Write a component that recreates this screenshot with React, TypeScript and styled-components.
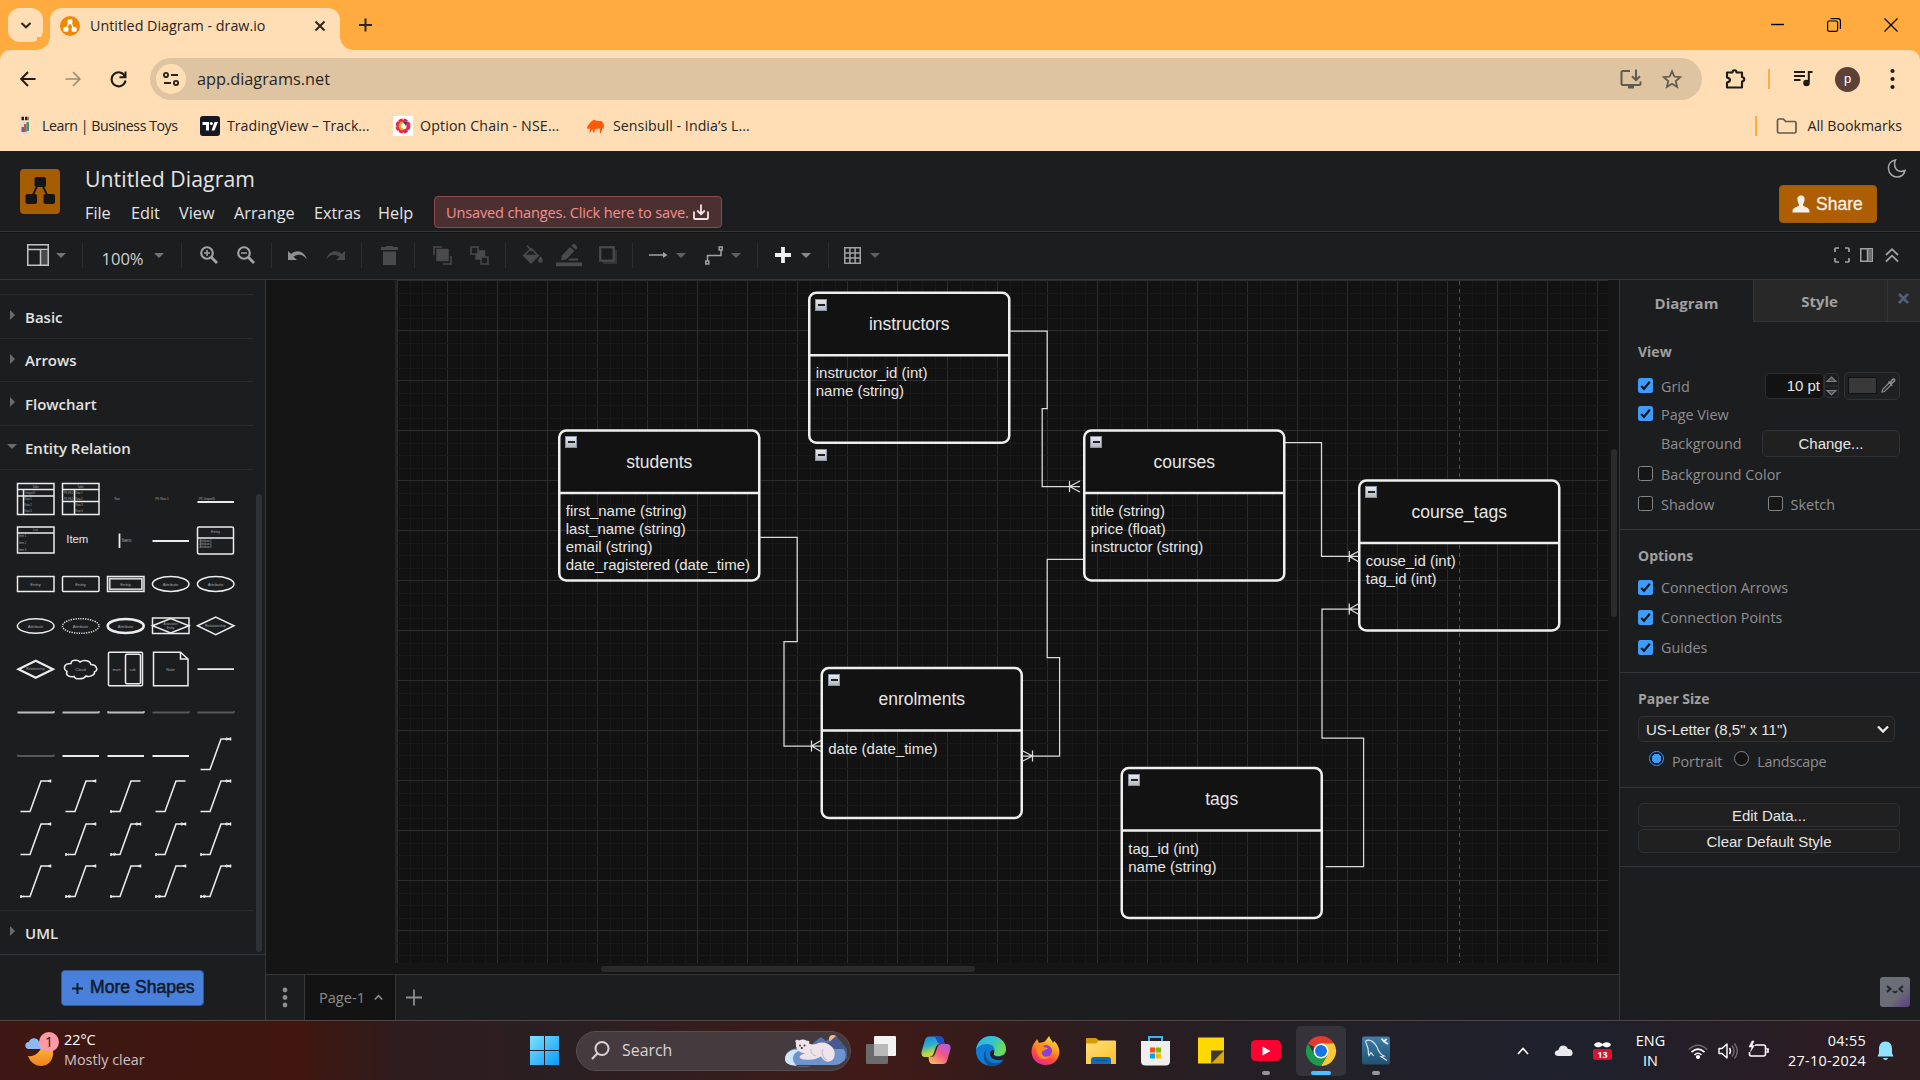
import React from "react";
import styled, { createGlobalStyle } from "styled-components";

const UI = `"Open Sans", "Noto Sans", sans-serif`;
const SANS = `"Liberation Sans", Arial, sans-serif`;

const Global = createGlobalStyle`
  * { box-sizing: border-box; }
  html, body { margin: 0; padding: 0; background: #1c1d1f; overflow: hidden; }
  svg { display: block; flex: none; overflow: visible; }
`;

const Screen = styled.div`
  width: 1920px;
  height: 1080px;
  display: flex;
  flex-direction: column;
  font-family: ${UI};
  overflow: hidden;
`;

const Label = styled.span<{ $size: number; $color?: string; $ls?: number; $weight?: number; $font?: string; $ml?: number; $mt?: number }>`
  font-family: ${(p) => p.$font || UI};
  font-size: ${(p) => p.$size}px;
  font-weight: ${(p) => p.$weight || 400};
  color: ${(p) => p.$color || "inherit"};
  letter-spacing: ${(p) => p.$ls || 0}px;
  margin-left: ${(p) => p.$ml || 0}px;
  margin-top: ${(p) => p.$mt || 0}px;
  line-height: 1.2;
  white-space: nowrap;
`;
const Grow = styled.div`
  flex: 1;
`;
const Gap = styled.div<{ $w: number }>`
  width: ${(p) => p.$w}px;
  flex: none;
`;

/* ---------- Browser chrome ---------- */

const TabStrip = styled.div`
  height: 50px;
  background: #ffab40;
  display: flex;
  align-items: flex-end;
  padding: 0 1px 0 8px;
  flex: none;
`;
const TabSearch = styled.div`
  width: 35px;
  height: 34px;
  border-radius: 12px;
  background: #ffdeb5;
  display: flex;
  align-items: center;
  justify-content: center;
  margin: 0 7px 8px 0;
`;
const Tab = styled.div`
  position: relative;
  width: 290px;
  height: 42px;
  background: #ffdeb5;
  border-radius: 12px 12px 0 0;
  display: flex;
  align-items: center;
  padding: 0 14px 7px 10px;
  color: #28241f;
  &::before, &::after {
    content: "";
    position: absolute;
    bottom: 0;
    width: 13px;
    height: 13px;
  }
  &::before { left: -13px; background: radial-gradient(circle at 0 0, #ffab40 12.5px, #ffdeb5 13px); }
  &::after { right: -13px; background: radial-gradient(circle at 100% 0, #ffab40 12.5px, #ffdeb5 13px); }
`;
const NewTab = styled.div`
  width: 50px;
  height: 50px;
  display: flex;
  align-items: center;
  justify-content: center;
`;
const WindowButton = styled.div<{ $w: number }>`
  width: ${(p) => p.$w}px;
  height: 49px;
  margin-bottom: 1px;
  display: flex;
  align-items: center;
  justify-content: center;
`;

const ChromeBars = styled.div`
  background: #ffab40;
  height: 101px;
  flex: none;
`;
const ChromeSurface = styled.div`
  background: #ffdeb5;
  border-radius: 10px 10px 0 0;
  height: 101px;
  padding-top: 8px;
`;
const AddressRow = styled.div`
  height: 42px;
  display: flex;
  align-items: center;
`;
const NavButton = styled.div<{ $w: number; $pl?: number }>`
  width: ${(p) => p.$w}px;
  height: 42px;
  flex: none;
  display: flex;
  align-items: center;
  justify-content: center;
  padding-left: ${(p) => p.$pl || 0}px;
`;
const Omnibox = styled.div`
  width: 1552px;
  height: 42px;
  flex: none;
  margin-left: 3px;
  border-radius: 21px;
  background: #dec4a1;
  display: flex;
  align-items: center;
  padding: 0 19px 0 6px;
  color: #28241f;
`;
const SiteInfo = styled.div`
  width: 30px;
  height: 30px;
  border-radius: 50%;
  background: #ffdeb5;
  display: flex;
  align-items: center;
  justify-content: center;
  margin-right: 11px;
`;
const Avatar = styled.div`
  width: 25px;
  height: 25px;
  border-radius: 50%;
  background: #5d4037;
  color: #fff;
  font: 13px/23px ${SANS};
  text-align: center;
  flex: none;
`;
const VBar = styled.div`
  width: 2px;
  height: 20px;
  background: #ffab40;
`;
const BookmarkRow = styled.div`
  height: 51px;
  display: flex;
  align-items: center;
  padding: 0 18px 0 15px;
  color: #28241f;
`;
const Bookmark = styled.div<{ $w: number; $gap: number }>`
  width: ${(p) => p.$w}px;
  display: flex;
  align-items: center;
  gap: ${(p) => p.$gap}px;
`;

/* ---------- App header ---------- */

const Header = styled.header`
  height: 80px;
  background: #1c1d1f;
  display: flex;
  padding-left: 20px;
  flex: none;
  color: #e4e4e4;
`;
const Logo = styled.div`
  width: 40px;
  height: 45px;
  margin: 18px 25px 0 0;
  border-radius: 4px;
  background: #a65c00;
`;
const HeaderMain = styled.div`
  display: flex;
  flex-direction: column;
  padding-top: 15px;
`;
const MenuRow = styled.div`
  display: flex;
  align-items: center;
  height: 32px;
  margin-top: 5px;
`;
const MenuItem = styled.div<{ $w: number }>`
  width: ${(p) => p.$w}px;
  font-size: 16.3px;
  line-height: 24px;
  white-space: nowrap;
  padding-top: 1px;
`;
const SaveNotice = styled.div`
  width: 288px;
  height: 32px;
  border: 1px solid #8b4a50;
  border-radius: 4px;
  background: #4b3032;
  color: #f68f8f;
  display: flex;
  align-items: center;
  justify-content: space-between;
  padding: 0 12px 0 11px;
`;
const HeaderRight = styled.div`
  display: flex;
  flex-direction: column;
  align-items: flex-end;
  padding: 7px 13px 0 0;
`;
const ShareButton = styled.div`
  width: 98px;
  height: 38px;
  margin: 6px 30px 0 0;
  border-radius: 4px;
  background: #ae5e02;
  border: 1px solid #a35a06;
  color: #f4efe9;
  display: flex;
  align-items: center;
  padding-left: 12px;
  gap: 6px;
  -webkit-text-stroke: 0.3px #f4efe9;
`;

const Toolbar = styled.div`
  height: 49px;
  flex: none;
  background: #1c1d1f;
  border-top: 1px solid #36373a;
  border-bottom: 1px solid #36373a;
  box-shadow: inset 0 1px 0 #111;
  display: flex;
  align-items: center;
  padding: 0 16px 1px 20px;
  color: #a3a3a3;
`;
const Tool = styled.div<{ $w: number; $ml?: number; $off?: boolean }>`
  width: ${(p) => p.$w}px;
  margin-left: ${(p) => p.$ml || 0}px;
  color: ${(p) => (p.$off ? "#4a4a4a" : "inherit")};
  display: flex;
  align-items: center;
  justify-content: center;
`;
const Rule = styled.div`
  width: 1px;
  height: 25px;
  background: #2c2d2f;
`;
const Caret = styled.div<{ $c?: string }>`
  border: 5.5px solid transparent;
  border-top-color: ${(p) => p.$c || "#737373"};
  border-bottom: 0;
`;

/* ---------- Workspace ---------- */

const Workspace = styled.div`
  height: 740px;
  flex: none;
  display: flex;
`;
const Sidebar = styled.aside`
  width: 266px;
  background: #1c1d1f;
  border-right: 1px solid #36373a;
  display: flex;
  flex-direction: column;
`;
const SideScroll = styled.div`
  height: 675px;
  display: flex;
  border-bottom: 1px solid #333437;
`;
const SideList = styled.div`
  width: 253px;
  padding-top: 14px;
`;
const SideTrack = styled.div`
  width: 12px;
  display: flex;
  padding: 214px 3px 0 3px;
`;
const Thumb = styled.div<{ $w: number; $h: number }>`
  width: ${(p) => p.$w}px;
  height: ${(p) => p.$h}px;
  border-radius: 4px;
  background: #303134;
`;
const Section = styled.div<{ $h: number }>`
  height: ${(p) => p.$h}px;
  border-top: 1px solid #2a2b2d;
  display: flex;
  align-items: center;
  color: #e2e2e2;
`;
const Twist = styled.div<{ $open?: boolean }>`
  width: 25px;
  padding-left: ${(p) => (p.$open ? 7 : 10)}px;
  padding-bottom: 3px;
`;
const TwistRight = styled.div`
  width: 0;
  border: 5px solid transparent;
  border-left-color: #6a6a6a;
  border-right: 0;
`;
const TwistDown = styled.div`
  width: 0;
  border: 5px solid transparent;
  border-top-color: #6a6a6a;
  border-bottom: 0;
`;
const Palette = styled.div`
  height: 441px;
  border-top: 1px solid #2a2b2d;
  padding: 8px 0 0 13px;
  display: grid;
  grid-template-columns: repeat(5, 45px);
  grid-auto-rows: 42.45px;
`;
const MoreWrap = styled.div`
  flex: 1;
  padding: 15px 0 0 61px;
`;
const MoreButton = styled.div`
  width: 143px;
  height: 36px;
  border-radius: 4px;
  background: #4980dc;
  border: 1px solid #35568f;
  color: #121c2c;
  display: flex;
  align-items: center;
  padding-left: 10px;
  gap: 7px;
  -webkit-text-stroke: 0.55px #121c2c;
`;

const CanvasColumn = styled.div`
  width: 1353px;
  display: flex;
  flex-direction: column;
`;
const CanvasArea = styled.div`
  position: relative;
  height: 694px;
  background: #151515;
  overflow: hidden;
`;
const Sheet = styled.svg`
  position: absolute;
  left: 0;
  top: 0;
`;
const EntityBox = styled.div`
  position: absolute;
  width: 200px;
  height: 150px;
  color: #e6e6e6;
  font-family: ${SANS};
`;
const EntityHead = styled.div`
  height: 62.5px;
  border-radius: 8px 8px 0 0;
  background: #121212;
  display: flex;
  align-items: center;
  justify-content: center;
  font-size: 17.5px;
  padding-top: 1px;
`;
const EntityBody = styled.div`
  padding: 9px 0 0 6.5px;
  font-size: 15px;
  line-height: 18px;
  white-space: nowrap;
`;
const Fold = styled.div`
  position: absolute;
  width: 12px;
  height: 12px;
  border: 1px solid #8a93a8;
  background: linear-gradient(#e9e9ee, #b6b8c0);
  display: flex;
  align-items: center;
  justify-content: center;
  &::after { content: ""; width: 7px; height: 1.5px; background: #222; }
`;
const ScrollThumb = styled.div<{ $x: number; $y: number; $w: number; $h: number }>`
  position: absolute;
  left: ${(p) => p.$x}px;
  top: ${(p) => p.$y}px;
  width: ${(p) => p.$w}px;
  height: ${(p) => p.$h}px;
  border-radius: 3px;
  background: #2b2b2b;
`;
const Footer = styled.div`
  height: 46px;
  background: #1c1d1f;
  border-top: 1px solid #36373a;
  display: flex;
  color: #8d8d8d;
`;
const FooterCell = styled.div<{ $w: number; $active?: boolean; $line?: boolean }>`
  width: ${(p) => p.$w}px;
  background: ${(p) => (p.$active ? "#131313" : "transparent")};
  border-right: ${(p) => (p.$line ? "1px solid #36373a" : "0")};
  display: flex;
  align-items: center;
  justify-content: center;
  gap: 9px;
  padding-top: 1px;
`;

/* ---------- Format panel ---------- */

const Panel = styled.aside`
  width: 301px;
  background: #1c1d1f;
  border-left: 1px solid #36373a;
  display: flex;
  flex-direction: column;
  color: #8f8f8f;
`;
const PanelTabs = styled.div`
  height: 42px;
  display: flex;
  flex: none;
`;
const PanelTab = styled.div<{ $w: number; $off?: boolean }>`
  width: ${(p) => p.$w}px;
  background: ${(p) => (p.$off ? "#282828" : "transparent")};
  border-left: ${(p) => (p.$off ? "1px solid #333437" : "0")};
  border-bottom: ${(p) => (p.$off ? "1px solid #333437" : "0")};
  display: flex;
  align-items: center;
  justify-content: center;
  padding: ${(p) => (p.$off ? "0 2px 0 0" : "4px 0 0 0")};
`;
const Group = styled.div<{ $h: number; $pt: number }>`
  height: ${(p) => p.$h}px;
  padding: ${(p) => p.$pt}px 20px 0 18px;
  border-bottom: 1px solid #333437;
`;
const Row = styled.div<{ $h: number; $pl?: number }>`
  height: ${(p) => p.$h}px;
  padding-left: ${(p) => p.$pl || 0}px;
  display: flex;
  align-items: center;
`;
const Check = styled.div<{ $on?: boolean }>`
  width: 15px;
  height: 15px;
  flex: none;
  border-radius: 2.5px;
  border: ${(p) => (p.$on ? "0" : "1px solid #858585")};
  background: ${(p) => (p.$on ? "#3f9cff" : "#161616")};
  display: flex;
  align-items: center;
  justify-content: center;
`;
const Field = styled.div`
  width: 59px;
  height: 26px;
  border: 1px solid #2c2d31;
  border-radius: 5px;
  background: #121212;
  color: #e6e6e6;
  font: 15px/24px ${SANS};
  text-align: right;
  padding-right: 3px;
  flex: none;
`;
const Spinner = styled.div`
  width: 15px;
  height: 25px;
  margin-right: 5px;
  border: 1px solid #303134;
  border-radius: 4px;
  flex: none;
  display: flex;
  align-items: center;
  justify-content: center;
`;
const ColorButton = styled.div`
  width: 56px;
  height: 28px;
  border: 1px solid #323336;
  border-radius: 5px;
  background: #1f2021;
  display: flex;
  align-items: center;
  padding-left: 3px;
  gap: 4px;
  flex: none;
`;
const Swatch = styled.div`
  width: 29px;
  height: 17px;
  background: #393939;
  border: 1px solid #111;
`;
const Button = styled.div<{ $w: number; $h: number; $mb?: number }>`
  width: ${(p) => p.$w}px;
  height: ${(p) => p.$h}px;
  margin-bottom: ${(p) => p.$mb || 0}px;
  border: 1px solid #303134;
  border-radius: 5px;
  background: #202020;
  color: #e6e6e6;
  font: 15px/1 ${SANS};
  display: flex;
  align-items: center;
  justify-content: center;
  flex: none;
`;
const Select = styled(Button)`
  justify-content: space-between;
  padding: 0 5px 0 7px;
`;
const Radio = styled.div<{ $on?: boolean; $ml?: number }>`
  width: 15px;
  height: 15px;
  border-radius: 50%;
  border: 1.5px solid ${(p) => (p.$on ? "#3f9cff" : "#858585")};
  background: ${(p) => (p.$on ? "radial-gradient(circle, #3f9cff 4.6px, #121212 5px)" : "#121212")};
  margin: 0 0 3px ${(p) => p.$ml || 0}px;
`;
const PanelFoot = styled.div`
  flex: 1;
  display: flex;
  justify-content: flex-end;
  align-items: flex-end;
  padding: 0 10px 13px 0;
`;
const Assistant = styled.div`
  width: 30px;
  height: 30px;
  border-radius: 3px;
  background: linear-gradient(135deg, #6c7178 0%, #6a6b76 62%, #5b3a86 100%);
  display: flex;
  justify-content: center;
  padding-top: 8px;
`;

/* ---------- Taskbar ---------- */

const Taskbar = styled.footer`
  height: 60px;
  flex: none;
  border-top: 1px solid #514546;
  background: linear-gradient(90deg, #3e1714 0, #40160f 300px, #2f1c1e 400px, #2a1f23 560px, #3a1c1a 800px, #401a16 860px, #2e1c1e 1060px, #231f25 1260px, #1f202b 1500px, #1e202b 1600px, #281d24 1760px, #2e1c20 1920px);
  display: flex;
  align-items: center;
  color: #fff;
`;
const Weather = styled.div`
  width: 517px;
  padding: 0 0 2px 25px;
  display: flex;
  align-items: center;
  gap: 5px;
`;
const Stack = styled.div<{ $align?: string; $w?: number; $ls?: number }>`
  width: ${(p) => (p.$w ? p.$w + "px" : "auto")};
  display: flex;
  flex-direction: column;
  align-items: ${(p) => p.$align || "flex-start"};
  font-size: 14.4px;
  letter-spacing: ${(p) => p.$ls || 0}px;
  line-height: 20px;
  white-space: nowrap;
`;
const TaskItem = styled.div<{ $w: number; $active?: boolean }>`
  width: ${(p) => p.$w}px;
  height: 50px;
  margin: 0 ${(p) => (p.$active ? 2.5 : 0)}px;
  border-radius: 5px;
  background: ${(p) => (p.$active ? "rgba(255,255,255,0.09)" : "transparent")};
  display: flex;
  flex-direction: column;
  align-items: center;
  padding-top: 10px;
`;
const Indicator = styled.div<{ $on?: boolean }>`
  width: ${(p) => (p.$on ? 20 : 8)}px;
  height: 4px;
  border-radius: 2px;
  margin-top: 5px;
  background: ${(p) => (p.$on ? "#4cc2ff" : "#98949a")};
`;
const SearchBox = styled.div`
  width: 275px;
  height: 40px;
  border-radius: 20px;
  border: 1px solid #574c4f;
  background: #453b3e;
  display: flex;
  align-items: center;
  padding: 0 1px 0 14px;
  gap: 12px;
  color: #d8d4d5;
  margin: 0 2px 0 4px;
`;
const TrayItem = styled.div<{ $w: number }>`
  width: ${(p) => p.$w}px;
  display: flex;
  align-items: center;
  justify-content: center;
`;

/* ---------- Drawings ---------- */

const DrawioMark = ({ w, h, c }: { w: number; h: number; c: string }) => (
  <svg width={w} height={h} viewBox="0 0 40 45">
    <path d="M19 13 L12 28 M21 13 L28 28" stroke={c} strokeWidth="1.8" />
    <rect x="14.5" y="8" width="11.5" height="10" rx="2" fill={c} />
    <rect x="5.5" y="25" width="11.5" height="10" rx="2" fill={c} />
    <rect x="23.500" y="25" width="11.5" height="10" rx="2" fill={c} />
  </svg>
);

const Favicon = () => (
  <svg width="20" height="20" viewBox="0 0 20 20">
    <circle cx="10" cy="10" r="10" fill="#f08705" />
    <path d="M9.5 6 L6 13 M10.5 6 L14 13" stroke="#fff" strokeWidth="1.3" />
    <rect x="7.6" y="3.6" width="4.8" height="4.6" rx="1" fill="#fff" />
    <rect x="3.4" y="11.2" width="5" height="4.6" rx="1" fill="#fff" />
    <rect x="11.6" y="11.2" width="5" height="4.6" rx="1" fill="#fff" />
  </svg>
);

type IconProps = { w?: number; h?: number; box?: string; sw?: number; children: React.ReactNode };
const Line = ({ w = 20, h, box, sw = 1.8, children }: IconProps) => (
  <svg width={w} height={h || w} viewBox={box || `0 0 ${w} ${h || w}`} fill="none" stroke="currentColor" strokeWidth={sw}>
    {children}
  </svg>
);

const Checked = () => (
  <Check $on>
    <svg width="11" height="11" viewBox="0 0 11 11" fill="none">
      <path d="M1.2 6 L4 8.8 L9.8 1.8" stroke="#101820" strokeWidth="2.2" />
    </svg>
  </Check>
);

const W = "#ececec";
const tiny = { fill: "#a8a8a8", fontFamily: SANS, textAnchor: "middle" as const };
const TinyText = ({ x = 22.5, y = 22.6, s = 4.2, children }: { x?: number; y?: number; s?: number; children: string }) => (
  <text x={x} y={y} fontSize={s} stroke="none" {...tiny}>{children}</text>
);

const Link = ({ a = 0, b = 0 }: { a?: number; b?: number }) => (
  <>
    <path d="M7.5 36.5 H17 L28 6 H37.5" strokeWidth="1.55" />
    {a > 0 && <path d="M8 35 V38 M10 36.5 H11" strokeWidth={1.5} />}
    {a > 1 && <circle cx="11.5" cy="36.3" r="1.1" strokeWidth="1" />}
    {b > 0 && <path d="M37.5 4.4 V7.6 M35 6 H37" strokeWidth={1.6} />}
    {b > 1 && <circle cx="33.8" cy="6" r="1.1" strokeWidth="1" />}
  </>
);
const Flat = ({ c, y = 22.3, sw = 2, l, r }: { c: string; y?: number; sw?: number; l?: boolean; r?: boolean }) => (
  <g stroke={c}>
    <path d={`M4.5 ${y} H41`} strokeWidth={sw} />
    {l && <path d={`M5 ${y - 1.6} V${y + 0.5}`} strokeWidth="1.2" />}
    {r && <path d={`M41 ${y - 1.6} V${y + 0.5}`} strokeWidth="1.4" />}
  </g>
);

const cells: React.ReactNode[] = [
  <><rect x="4.5" y="5.5" width="36.5" height="31" /><path d="M4.5 11.5 H41 M4.5 18 H41 M10.5 11.5 V36.5" /><TinyText y={10} s={2.6}>Table</TinyText><TinyText x={17} y={16} s={2.6}>UniqueID</TinyText><TinyText x={15} y={22} s={2.6}>Row 1</TinyText><TinyText x={15} y={28} s={2.6}>Row 2</TinyText><TinyText x={15} y={34} s={2.6}>Row 3</TinyText></>,
  <><rect x="4.5" y="5.5" width="36.5" height="31" /><path d="M4.5 11.5 H41 M4.5 23.5 H41 M16.5 11.5 V36.5" /><TinyText y={10} s={2.6}>Table</TinyText><TinyText x={10.5} y={16} s={2.6}>PK,FK1</TinyText><TinyText x={10.5} y={22} s={2.6}>PK,FK2</TinyText><TinyText x={21} y={16} s={2.6}>Row 1</TinyText><TinyText x={21} y={22} s={2.6}>Row 2</TinyText><TinyText x={21} y={28} s={2.6}>Row 3</TinyText><TinyText x={21} y={34} s={2.6}>Row 4</TinyText></>,
  <TinyText x={14} y={22} s={2.6}>Row</TinyText>,
  <TinyText x={14} y={22} s={3}>PK Row 1</TinyText>,
  <><path d="M4.5 24 H41" strokeWidth="2" /><TinyText x={14} y={22} s={2.8}>PK UniqueID</TinyText></>,
  <><rect x="4.5" y="7" width="36.5" height="26" /><path d="M4.5 13 H41" /><TinyText y={11.5} s={3}>List</TinyText><TinyText x={9.500} y={17} s={2.6}>Item 1</TinyText><TinyText x={9.500} y={24} s={2.6}>Item 2</TinyText><TinyText x={9.500} y={31} s={2.6}>Item 3</TinyText></>,
  <text x="19.3" y="23" fontSize="11.4" fill="#e6e6e6" stroke="none" fontFamily={SANS} textAnchor="middle">Item</text>,
  <><path d="M16.500 13.500 V28" strokeWidth="1.8" /><TinyText x={23.5} y={22.500} s={5}>Item</TinyText></>,
  <path d="M4.5 21 H41" strokeWidth="1.9" />,
  <><rect x="4.5" y="7" width="36" height="27" rx="1.5" /><path d="M4.5 18 H40.5" /><TinyText y={13.5} s={3.6}>Entity</TinyText><TinyText x={12.5} y={22} s={2.8}>Attribute1</TinyText><TinyText x={12.5} y={25} s={2.8}>Attribute2</TinyText><TinyText x={12.5} y={28} s={2.8}>Attribute3</TinyText></>,
  <><rect x="4.5" y="13.5" width="36.5" height="15" /><TinyText>Entity</TinyText></>,
  <><rect x="4.5" y="13.5" width="36.5" height="15" rx="1" /><TinyText>Entity</TinyText></>,
  <><rect x="4.5" y="13.5" width="36.5" height="15" /><rect x="6.7" y="15.7" width="32.200" height="10.6" strokeWidth="1.8" stroke="#cfcfcf" /><TinyText>Entity</TinyText></>,
  <><ellipse cx="22.7" cy="21" rx="18.3" ry="7.5" /><TinyText>Attribute</TinyText></>,
  <><ellipse cx="22.7" cy="21" rx="18.3" ry="7.5" /><TinyText>Attribute</TinyText></>,
  <><ellipse cx="22.7" cy="21" rx="18.3" ry="7.3" /><TinyText>Attribute</TinyText></>,
  <><ellipse cx="22.7" cy="21" rx="18.3" ry="7.3" strokeDasharray="1.2 1.2" /><TinyText>Attribute</TinyText></>,
  <><ellipse cx="22.7" cy="21" rx="18" ry="7" strokeWidth="2.6" /><TinyText>Attribute</TinyText></>,
  <><rect x="4.5" y="13" width="36.5" height="15.5" /><path d="M4.5 20.8 L22.7 13.5 L41 20.8 L22.7 28 Z" /><TinyText y={19.6} s={2.8}>Associative</TinyText><TinyText y={23.6} s={3}>Entity</TinyText></>,
  <><path d="M4.5 20.8 L22.7 12 L41 20.8 L22.7 29.6 Z" /><TinyText y={22} s={3.8}>Relationship</TinyText></>,
  <><path d="M5.5 21.300 L22.7 12.8 L40 21.300 L22.7 29.8 Z" strokeWidth="2.2" /><TinyText y={22} s={3.4}>Relationship</TinyText></>,
  <><path d="M13 15.500 C13 11.500 20 11.500 22 14 C26 11.500 32 12.500 33 16.500 C38 16.500 41 21.500 36.5 24 C37 28 30 29 28 28 C25 32 17 31.500 16 28.500 C12 29.500 7 27.500 9 23.500 C4.5 20.500 6 15.500 13 15.500 Z" /><TinyText y={22.8} s={4}>Cloud</TinyText></>,
  <><rect x="5.5" y="4.300" width="34" height="33.5" rx="1" /><rect x="22.5" y="6.300" width="15" height="29.500" rx="1.5" /><TinyText x={13.5} y={22.8} s={3.6}>main</TinyText><TinyText x={29.5} y={22.8} s={3.6}>sub</TinyText></>,
  <><path d="M5.5 4.300 H32.5 L40 11 V37.8 H5.5 Z M32.5 4.300 V11 H40" /><TinyText y={22.8} s={4}>Note</TinyText></>,
  <Flat c={W} y={21.2} sw={1.7} />,
  <Flat c="#bdbdbd" y={22.600} r />, <Flat c="#bdbdbd" y={22.600} r />, <Flat c="#bdbdbd" y={22.600} l r />, <Flat c="#585858" y={22.600} r />, <Flat c="#585858" y={22.600} r />,
  <Flat c="#585858" y={23} l r />, <Flat c={W} y={23} sw={2.200} />, <Flat c={W} y={23} sw={2.200} />, <Flat c={W} y={23} sw={2.200} />, <Link b={2} />,
  <Link b={1} />, <Link b={1} />, <Link a={1} />, <Link />, <Link b={2} />,
  <Link b={1} />, <Link a={1} b={1} />, <Link a={2} b={2} />, <Link a={1} b={2} />, <Link a={1} b={2} />,
  <Link a={1} b={1} />, <Link a={2} b={1} />, <Link a={1} b={1} />, <Link a={2} b={1} />, <Link a={2} b={2} />,
];

type Entity = { name: string; x: number; y: number; rows: string[] };
const entities: Entity[] = [
  { name: "instructors", x: 543.25, y: 12.75, rows: ["instructor_id (int)", "name (string)"] },
  { name: "students", x: 293.25, y: 150.5, rows: ["first_name (string)", "last_name (string)", "email (string)", "date_ragistered (date_time)"] },
  { name: "courses", x: 818.25, y: 150.5, rows: ["title (string)", "price (float)", "instructor (string)"] },
  { name: "course_tags", x: 1093.25, y: 200.5, rows: ["couse_id (int)", "tag_id (int)"] },
  { name: "enrolments", x: 555.75, y: 388, rows: ["date (date_time)"] },
  { name: "tags", x: 855.75, y: 488, rows: ["tag_id (int)", "name (string)"] },
];

const gridLines = () => {
  const out: React.ReactNode[] = [];
  for (let i = 0; i <= 96; i++) {
    const x = Math.round(131 + i * 12.5) + 0.5;
    out.push(<path key={"v" + i} d={`M${x} 1 V683`} stroke={i % 4 ? "#191919" : "#2d2d2d"} />);
  }
  for (let i = 0; i <= 54; i++) {
    const y = Math.round(i * 12.5) + 0.5;
    out.push(<path key={"h" + i} d={`M131 ${y} H1342`} stroke={i % 4 ? "#191919" : "#2d2d2d"} />);
  }
  return out;
};

const Canvas = () => (
  <CanvasArea>
    <Sheet width="1353" height="694" fill="none">
      <rect x="130" y="1" width="1212" height="682" fill="#121212" />
      {gridLines()}
      <path d="M130 1 V683" stroke="#242424" strokeWidth="2" />
      <path d="M1193.5 1 V683" stroke="#4a4a4a" strokeDasharray="4 4" />
    </Sheet>
    {entities.map((e) => (
      <EntityBox key={e.name} style={{ left: e.x, top: e.y }}>
        <EntityHead>{e.name}</EntityHead>
        <EntityBody>{e.rows.map((r) => <div key={r}>{r}</div>)}</EntityBody>
      </EntityBox>
    ))}
    <Sheet width="1353" height="694" fill="none" stroke="#efefef" strokeWidth="2.5">
      {entities.map((e) => (
        <g key={e.name}>
          <rect x={e.x} y={e.y} width="200" height="150" rx="7" />
          <path d={`M${e.x} ${e.y + 62.5} h200`} />
        </g>
      ))}
    </Sheet>
    {entities.map((e) => <Fold key={e.name} style={{ left: Math.round(e.x + 5.75), top: Math.round(e.y + 5.75) }} />)}
    <Fold style={{ left: 549, top: 169 }} />
    <Sheet width="1353" height="694" fill="none" stroke="#dcdcdc" strokeWidth="1.25">
      <path d="M744 51.200 H781.200 V128.500 H776.200 V206.500 H814 M803.500 201 V212 M803.500 206.500 L814 201 M803.500 206.500 L814 212" />
      <path d="M1019 162.700 H1055.500 V276.400 H1093 M1083.300 271 V282 M1083.300 276.400 L1093 271 M1083.300 276.400 L1093 282" />
      <path d="M1059.600 586.600 H1097.600 V458.200 H1056 V329 H1093 M1083.300 323.500 V334.500 M1083.300 329 L1093 323.500 M1083.300 329 L1093 334.500" />
      <path d="M817 279.300 H781.200 V377.500 H793.600 V476 H756 M766.500 470.500 V481.500 M766.500 476 L756 470.500 M766.500 476 L756 481.500" />
      <path d="M494 257.300 H531.200 V361.500 H518 V466 H555 M545.500 460.500 V471.500 M545.500 466 L555 460.500 M545.500 466 L555 471.500" />
    </Sheet>
    <ScrollThumb $x={335} $y={686} $w={374} $h={6} />
    <ScrollThumb $x={1345} $y={169} $w={6} $h={168} />
  </CanvasArea>
);

const Sep = ({ w }: { w: number }) => <Tool $w={w}><Rule /></Tool>;

const sections: [string, number][] = [["Basic", 44], ["Arrows", 43], ["Flowchart", 44]];

export default function App() {
  return (
    <Screen>
      <Global />
      <TabStrip>
        <TabSearch><Line w={12} sw={2}><path d="M1.500 4 L6 8.300 L10.500 4" stroke="#28241f" /></Line></TabSearch>
        <Tab>
          <Favicon />
          <Label $size={14.3} $ml={10} $mt={1}>Untitled Diagram - draw.io</Label>
          <Grow />
          <Line w={12} sw={1.900}><path d="M1.500 1.500 L10.500 10.500 M10.500 1.500 L1.500 10.500" /></Line>
        </Tab>
        <NewTab><Line w={14} sw={2}><path d="M7.500 0.500 V13.500 M1 7 H14" stroke="#2b2620" /></Line></NewTab>
        <Grow />
        <WindowButton $w={56}><Line w={13} sw={1.400}><path d="M0 6.500 H13" stroke="#000" /></Line></WindowButton>
        <WindowButton $w={58}><Line w={14} sw={1.200}><g stroke="#000"><rect x="0.600" y="3" width="10" height="10.300" rx="1.500" /><path d="M3.500 0.700 H11 Q13.400 0.700 13.400 3 V11" /></g></Line></WindowButton>
        <WindowButton $w={56}><Line w={14} sw={1.200}><path d="M0.500 0.500 L13.500 13.500 M13.500 0.500 L0.500 13.500" stroke="#000" /></Line></WindowButton>
      </TabStrip>

      <ChromeBars>
        <ChromeSurface>
          <AddressRow>
            <NavButton $w={56}><Line w={16} sw={2}><path d="M15.500 8 H1.500 M8 1 L1.200 8 L8 15" stroke="#1f1c18" /></Line></NavButton>
            <NavButton $w={33}><Line w={16} sw={1.700}><path d="M0.500 8 H14.500 M8 1 L14.800 8 L8 15" stroke="#a08c72" /></Line></NavButton>
            <NavButton $w={58}><Line w={17} sw={2}><path d="M15 5.500 A7 7 0 1 0 15.500 9.500 M15.500 0.500 V6.300 H9.500" stroke="#1f1c18" /></Line></NavButton>
            <Omnibox>
              <SiteInfo>
                <Line w={16} h={14} sw={1.900}><circle cx="3" cy="3" r="2.100" /><path d="M8 3 H15 M1 11 H8" /><circle cx="13" cy="11" r="2.100" /></Line>
              </SiteInfo>
              <Label $size={16.3} $mt={2}>app.diagrams.net</Label>
              <Grow />
              <Line w={22} sw={2}>
                <g stroke="#5f5a52"><path d="M10 3 H3 Q1.500 3 1.500 4.500 V15.500 Q1.500 17 3 17 H19 Q20.500 17 20.500 15.500 V13.500 M16 1.500 V12 M12 8.300 L16 12.200 L20 8.300" /><path d="M8 19 H14" strokeWidth="3" /></g>
              </Line>
              <Gap $w={19} />
              <Line w={22} h={22} box="0 0 24 24" sw={1.900}>
                <path d="M12 3.500 L14.500 9.300 L21 9.900 L16.100 14.200 L17.600 20.600 L12 17.200 L6.400 20.600 L7.900 14.200 L3 9.900 L9.500 9.300 Z" stroke="#5f5a52" />
              </Line>
            </Omnibox>
            <NavButton $w={66}><Line w={22} sw={2.100}><path d="M3 4.500 H8.500 C8.500 1.500 12.500 1.500 12.500 4.500 H18 V9 C21 9.500 21 13 18 13.500 V19.500 H3 V14.500 C7 13.500 7 10.500 3 9.500 Z" stroke="#1f1c18" strokeLinejoin="round" /></Line></NavButton>
            <VBar />
            <NavButton $w={65}><Line w={20} h={18} sw={2}><g stroke="#1f1c18"><path d="M1 2 H12 M1 6 H12 M1 10 H7.500 M15.800 12 V2 H19.500" /><circle cx="13.500" cy="13" r="2.300" fill="#1f1c18" /></g></Line></NavButton>
            <Avatar>p</Avatar>
            <NavButton $w={60} $pl={4}><svg width="5" height="22"><g fill="#1f1c18"><circle cx="2.500" cy="3" r="2.100" /><circle cx="2.500" cy="11" r="2.100" /><circle cx="2.500" cy="19" r="2.100" /></g></svg></NavButton>
          </AddressRow>
          <BookmarkRow>
            <Bookmark $w={185} $gap={7}>
              <svg width="20" height="20" viewBox="0 0 20 20">
                <path d="M6.500 6 H14 V16 L10 19.500 L6.500 16 Z" fill="#d8dce0" />
                <path d="M6.500 2.500 H14" stroke="#222" strokeWidth="3.500" strokeDasharray="2.500 1" />
                <rect x="6.500" y="11" width="2.500" height="5" fill="#3f6fb5" /><rect x="9" y="8" width="2.500" height="8" fill="#e3473a" /><rect x="11.500" y="6" width="2.500" height="9" fill="#3c9b6b" />
              </svg>
              <Label $size={14.2} $ls={-0.46}>Learn | Business Toys</Label>
            </Bookmark>
            <Bookmark $w={193} $gap={7}>
              <svg width="20" height="20" viewBox="0 0 20 20">
                <rect width="20" height="20" rx="3" fill="#131722" />
                <path d="M2.500 6 H9 V14.500 H6 V9 H2.500 Z M14.500 6 H18 L14.500 14.500 H11.500 Z" fill="#fff" /><circle cx="11.300" cy="7.500" r="1.500" fill="#fff" />
              </svg>
              <Label $size={14.2}>TradingView – Track...</Label>
            </Bookmark>
            <Bookmark $w={193} $gap={7}>
              <svg width="20" height="20" viewBox="0 0 20 20">
                <rect width="20" height="20" fill="#fff" /><circle cx="10" cy="10" r="6" fill="none" stroke="#e02a4e" strokeWidth="3" strokeDasharray="3.600 1.100" />
                <circle cx="10" cy="10" r="5" fill="none" stroke="#e02a4e" strokeWidth="3" />
                <path d="M5.500 10 A4.500 4.500 0 0 1 10 5.500 L10 14.500 A4.500 4.500 0 0 1 5.500 10 Z" fill="#f5a11c" /><path d="M10 5.500 L14 6.500 L12.500 10 Z" fill="#2f3a8c" /><circle cx="10" cy="10" r="2.300" fill="#fff" />
              </svg>
              <Label $size={14.2} $ls={0.14}>Option Chain - NSE...</Label>
            </Bookmark>
            <Bookmark $w={193} $gap={7}>
              <svg width="20" height="20" viewBox="0 0 20 20">
                <path d="M1 11 L3.500 7.500 C5 5.500 7.500 3 9.500 4.500 L13.500 5 C16 4.500 18 7 18 10 L17.500 13 L16.500 12 L15 17 H13.800 V12.500 L9.500 13 L8 16.500 H6.800 L6.500 13 L3.500 17.500 L4 12.500 L1.500 13 Z" fill="#ff5a0a" />
              </svg>
              <Label $size={14.2} $ls={0.05}>Sensibull - India’s L...</Label>
            </Bookmark>
            <Grow />
            <VBar />
            <Gap $w={19} />
            <Line w={22} h={16} sw={1.700}><path d="M1.500 13.500 V2.500 Q1.500 1 3 1 H7.500 L9.500 3.500 H18.500 Q20 3.500 20 5 V13.500 Q20 15 18.500 15 H3 Q1.500 15 1.500 13.500 Z" stroke="#5f5a52" /></Line>
            <Label $size={14.2} $ml={9}>All Bookmarks</Label>
          </BookmarkRow>
        </ChromeSurface>
      </ChromeBars>

      <Header>
        <Logo><DrawioMark w={40} h={45} c="#151515" /></Logo>
        <HeaderMain>
          <Label $size={21.2} $ls={0.08}>Untitled Diagram</Label>
          <MenuRow>
            <MenuItem $w={46}>File</MenuItem>
            <MenuItem $w={48}>Edit</MenuItem>
            <MenuItem $w={55}>View</MenuItem>
            <MenuItem $w={80}>Arrange</MenuItem>
            <MenuItem $w={64}>Extras</MenuItem>
            <MenuItem $w={56}>Help</MenuItem>
            <SaveNotice>
              <Label $size={14.6} $ls={-0.17}>Unsaved changes. Click here to save.</Label>
              <Line w={16} sw={1.800}><path d="M8 0.500 V10 M4.200 6.500 L8 10.300 L11.800 6.500 M1 7.500 V14 Q1 15 2 15 H14 Q15 15 15 14 V7.500" stroke="#f2e6e6" /></Line>
            </SaveNotice>
          </MenuRow>
        </HeaderMain>
        <Grow />
        <HeaderRight>
          <Line w={21} sw={1.500}><path d="M9.500 2 C4 3 2 7 2.500 11 C3 16 7 19 11 19 C15 19 18 16.500 19 12.500 C15 14 11.500 13.500 9.800 10.500 C8.300 8 8.300 4.500 9.500 2 Z" stroke="#a9a9a9" /></Line>
          <ShareButton>
            <svg width="18" height="19" viewBox="0 0 18 19"><path d="M9 0.500 C12 0.500 13 3 12.500 5.500 C12.200 7.500 11 8.500 11 10 C11 12 17.500 12 17.500 16 V17.500 H0.500 V16 C0.500 12 7 12 7 10 C7 8.500 5.800 7.500 5.500 5.500 C5 3 6 0.500 9 0.500 Z" fill="#f4efe9" /></svg>
            <Label $size={17.5} $font={SANS}>Share</Label>
          </ShareButton>
        </HeaderRight>
      </Header>

      <Toolbar>
        <Tool $w={36}>
          <svg width="22" height="22" fill="none" stroke="#c4c4c4" strokeWidth="1.500"><rect x="14" y="7" width="7" height="14" fill="#4a4a4a" stroke="none" /><rect x="0.750" y="0.750" width="20.500" height="20.500" /><path d="M1 5.500 H21 M13.500 5.500 V21" /></svg>
        </Tool>
        <Tool $w={10}><Caret /></Tool>
        <Sep w={33} />
        <Tool $w={48}><Label $size={16.6} $color="#d0d0d0" $mt={8} $ml={-1}>100%</Label></Tool>
        <Tool $w={24}><Caret /></Tool>
        <Sep w={20} />
        <Tool $w={35}><Line w={18} sw={2.100}><circle cx="7" cy="7" r="5.800" /><path d="M11.300 11.300 L17 17" strokeWidth="2.800" /><path d="M4 7 H10 M7 4 V10" strokeWidth="1.500" /></Line></Tool>
        <Tool $w={39}><Line w={18} sw={2.100}><circle cx="7" cy="7" r="5.800" /><path d="M11.300 11.300 L17 17" strokeWidth="2.800" /><path d="M4 7 H10" strokeWidth="1.500" /></Line></Tool>
        <Sep w={13} />
        <Tool $w={39}><svg width="19" height="11" fill="#8f8f8f"><path d="M0 1 V10 H9 L5.500 6.800 C9.500 3.500 15.500 4 18.800 9.500 C16.500 0.500 8 -1 3.200 4 Z" /></svg></Tool>
        <Tool $w={36}><svg width="19" height="11" fill="#4a4a4a"><path d="M19 1 V10 H10 L13.500 6.800 C9.500 3.500 3.500 4 0.200 9.500 C2.500 0.500 11 -1 15.800 4 Z" /></svg></Tool>
        <Sep w={17} />
        <Tool $w={39}><svg width="17" height="19" fill="#4a4a4a"><path d="M0 1 H5 V0 H12 V1 H17 V4 H0 Z M2 5.500 H15 V19 H2 Z" /></svg></Tool>
        <Sep w={11} />
        <Tool $w={44} $off><Line w={19} sw={1.500}><rect x="4" y="3.500" width="11" height="11" fill="currentColor" /><path d="M1 9 V1 H9 M10 18 H18 V10" /></Line></Tool>
        <Tool $w={30} $off><Line w={19} sw={1.500}><path d="M6 5 H14.500 V13 H6 Z" fill="currentColor" /><rect x="1" y="1" width="7" height="7" fill="#1c1d1f" /><rect x="11" y="11" width="7" height="7" fill="#1c1d1f" /></Line></Tool>
        <Sep w={22} />
        <Tool $w={31} $off><Line w={20} sw={1.600}><path d="M2 10.500 L9 3.500 L16 10.500 L9 17.500 Z" fill="#1c1d1f" /><path d="M2 10.500 H16 L9 17.500 Z M18.500 12.500 C20.500 15 20.500 17 18.500 17 C16.500 17 16.500 15 18.500 12.500 Z" fill="currentColor" /><path d="M5 0.500 L10 6" /></Line></Tool>
        <Tool $w={44} $off><Line w={26} h={22} sw={0}><g fill="currentColor"><path d="M5 16.500 L6 11.500 L14 3 L18.500 7 L10 15.500 Z M15.300 1.700 L17 0 Q20 -0.500 21.500 3.500 L19.800 5.700 Z M12 16.500 L14 14.500 H22 V16.500 Z" /><rect y="18.500" width="26" height="3.700" /></g></Line></Tool>
        <Tool $w={33} $off><Line w={18} sw={2.200}><rect x="4" y="4" width="14" height="14" fill="#333436" stroke="none" /><rect x="1.200" y="1.200" width="13.500" height="13.500" fill="#1c1d1f" /></Line></Tool>
        <Sep w={17} />
        <Tool $w={35}><Line w={19} h={8} sw={1.500}><path d="M0 4 H15" /><path d="M14 1 L18.500 4 L14 7 Z" fill="currentColor" stroke="none" /></Line></Tool>
        <Tool $w={10}><Caret $c="#606060" /></Tool>
        <Tool $w={27} $ml={14}><Line w={18} h={19} sw={1.500}><path d="M2.500 15 V9.500 H16 V4" /><rect x="0.750" y="15" width="3" height="3" /><rect x="14.200" y="1" width="3" height="3" /></Line></Tool>
        <Tool $w={18}><Caret $c="#606060" /></Tool>
        <Sep w={25} />
        <Tool $w={26}><Line w={16} sw={3.800}><path d="M8 0 V16 M0 8 H16" stroke="#f0f0f0" /></Line></Tool>
        <Tool $w={20}><Caret $c="#8a8a8a" /></Tool>
        <Sep w={25} />
        <Tool $w={22}><Line w={17} sw={1.500}><path d="M0.750 0.750 H16.250 V16.250 H0.750 Z M0.750 5.900 H16.250 M0.750 11.100 H16.250 M5.900 0.750 V16.250 M11.100 0.750 V16.250" /></Line></Tool>
        <Tool $w={24}><Caret $c="#606060" /></Tool>
        <Grow />
        <Tool $w={25}><Line w={16} sw={1.700}><path d="M1 5 V2 Q1 1 2 1 H5 M11 1 H14 Q15 1 15 2 V5 M15 11 V14 Q15 15 14 15 H11 M5 15 H2 Q1 15 1 14 V11" /></Line></Tool>
        <Tool $w={25}><Line w={13} h={14} sw={1.500}><rect x="0.750" y="0.750" width="11.500" height="12.500" /><rect x="7" y="1" width="5" height="12" fill="#6a6a6a" stroke="none" /><path d="M7.500 1 V13" /></Line></Tool>
        <Tool $w={25}><Line w={14} h={14} sw={1.800}><path d="M1 7 L7 1.200 L13 7 M1 13.500 L7 7.700 L13 13.500" /></Line></Tool>
      </Toolbar>

      <Workspace>
        <Sidebar>
          <SideScroll>
            <SideList>
              {sections.map(([n, h]) => (
                <Section key={n} $h={h}>
                  <Twist><TwistRight /></Twist>
                  <Label $size={15} $weight={600}>{n}</Label>
                </Section>
              ))}
              <Section $h={44}>
                <Twist $open><TwistDown /></Twist>
                <Label $size={15} $weight={600}>Entity Relation</Label>
              </Section>
              <Palette>
                {cells.map((c, i) => (
                  <svg key={i} width="45" height="42.450" viewBox="0 0 45 42.450" fill="none" stroke={W} strokeWidth="1.500">{c}</svg>
                ))}
              </Palette>
              <Section $h={44}>
                <Twist><TwistRight /></Twist>
                <Label $size={15} $weight={600}>UML</Label>
              </Section>
            </SideList>
            <SideTrack><Thumb $w={6} $h={458} /></SideTrack>
          </SideScroll>
          <MoreWrap>
            <MoreButton>
              <Line w={11} sw={2}><path d="M5.500 0 V11 M0 5.500 H11" /></Line>
              <Label $size={17.6} $font={SANS}>More Shapes</Label>
            </MoreButton>
          </MoreWrap>
        </Sidebar>

        <CanvasColumn>
          <Canvas />
          <Footer>
            <FooterCell $w={39} $line><svg width="5" height="20" fill="#8d8d8d"><circle cx="2" cy="2" r="2.400" /><circle cx="2" cy="9.500" r="2.400" /><circle cx="2" cy="17" r="2.400" /></svg></FooterCell>
            <FooterCell $w={91} $active $line><Label $size={14.6} $ml={2}>Page-1</Label><Line w={9} h={6} sw={1.700}><path d="M0.800 4.500 L4.500 0.700 L8.200 4.500" /></Line></FooterCell>
            <FooterCell $w={36}><Line w={16} sw={1.800}><path d="M8 -0.500 V15.500 M0 7.500 H16" /></Line></FooterCell>
          </Footer>
        </CanvasColumn>

        <Panel>
          <PanelTabs>
            <PanelTab $w={133}><Label $size={15} $weight={700} $color="#a0a0a0">Diagram</Label></PanelTab>
            <PanelTab $w={134} $off><Label $size={15} $weight={700} $color="#a0a0a0">Style</Label></PanelTab>
            <PanelTab $w={33} $off><Line w={11} sw={2.800}><path d="M1 -1 L10 8 M10 -1 L1 8" stroke="#4d6079" /></Line></PanelTab>
          </PanelTabs>
          <Group $h={208} $pt={18}>
            <Row $h={22}><Label $size={14} $weight={700} $color="#a0a0a0" $mt={2}>View</Label></Row>
            <Row $h={47}><Checked /><Label $size={14.4} $ml={8} $mt={2}>Grid</Label><Grow /><Field>10 pt</Field>
              <Spinner><Line w={11} h={20} sw={1.200}><path d="M1 5.500 L5.500 1 L10 5.500 Z M1 14.500 L5.500 19 L10 14.500 Z" fill="#4a4a4a" stroke="#808080" /><path d="M-2 10 H13" stroke="#303134" /></Line></Spinner>
              <ColorButton><Swatch /><Line w={14} h={15} sw={1.200}><path d="M1 14 L1.500 11.500 L8.500 4.500 L10.500 6.500 L3.500 13.500 Z" /><path d="M7.500 3.500 L11.500 7.500 M9 5 L11.500 1.500 Q13 0.500 13.500 1.500 Q14 2.500 13 3.500 L10 6 Z" strokeWidth="1.600" /></Line></ColorButton>
            </Row>
            <Row $h={9}><Checked /><Label $size={14.4} $ml={8} $mt={2}>Page View</Label></Row>
            <Row $h={51} $pl={23}><Label $size={14.4} $mt={1}>Background</Label><Grow /><Button $w={138} $h={27}>Change...</Button></Row>
            <Row $h={9}><Check /><Label $size={14.4} $ml={8} $mt={3}>Background Color</Label></Row>
            <Row $h={51}><Check /><Label $size={14.4} $ml={8} $mt={3}>Shadow</Label><Grow /><Check /><Label $size={14.4} $ml={8} $mt={3}>Sketch</Label><Gap $w={65} /></Row>
          </Group>
          <Group $h={143} $pt={13}>
            <Row $h={26}><Label $size={14} $weight={700} $color="#a0a0a0">Options</Label></Row>
            <Row $h={37}><Checked /><Label $size={14.3} $ml={8} $mt={1}>Connection Arrows</Label></Row>
            <Row $h={23}><Checked /><Label $size={14.3} $ml={8} $mt={1}>Connection Points</Label></Row>
            <Row $h={37}><Checked /><Label $size={14.3} $ml={8} $mt={1}>Guides</Label></Row>
          </Group>
          <Group $h={115} $pt={15}>
            <Row $h={22}><Label $size={14} $weight={700} $color="#a0a0a0">Paper Size</Label></Row>
            <Row $h={38}><Select $w={257} $h={26}>US-Letter (8,5" x 11")<Line w={12} h={8} sw={2.300}><path d="M1 1.500 L6 6.500 L11 1.500" stroke="#ececec" /></Line></Select></Row>
            <Row $h={24} $pl={11}><Radio $on /><Label $size={14.3} $ls={-0.05} $ml={8} $mt={3}>Portrait</Label><Radio $ml={12} /><Label $size={14.3} $ls={-0.25} $ml={8} $mt={3}>Landscape</Label></Row>
          </Group>
          <Group $h={79} $pt={15}>
            <Button $w={262} $h={24} $mb={2}>Edit Data...</Button>
            <Button $w={262} $h={24}>Clear Default Style</Button>
          </Group>
          <PanelFoot>
            <Assistant><Line w={18} h={10} sw={2}><path d="M1 1 L4.500 4 L1 7 M17 1 L13.500 4 L17 7 M7 6 Q9 8.500 11 6" stroke="#22252c" /></Line></Assistant>
          </PanelFoot>
        </Panel>
      </Workspace>

      <Taskbar>
        <Weather>
          <svg width="34" height="36" viewBox="0 0 34 36">
            <defs><linearGradient id="moon" x1="0" y1="0" x2="0" y2="1"><stop offset="0" stopColor="#f8c33c" /><stop offset="1" stopColor="#f0801f" /></linearGradient></defs>
            <path d="M3 24 C10 25 16 20 17 12 C25 10 29 17 28 23 C26 37 8 38 3 24 Z" fill="url(#moon)" />
            <path d="M4 17 C-1 17 -1 10 4 10 C5 5 13 5 14 10 C19 10 19 17 15 17 Z" fill="#8fb9f5" />
            <circle cx="24" cy="10" r="10" fill="#ff99a4" />
            <text x="24" y="15" fontSize="14" fontFamily={UI} fill="#1a1a1a" textAnchor="middle">1</text>
          </svg>
          <Stack><span>22°C</span><Label $size={14.4} $color="#cfc2c1" $mt={1}>Mostly clear</Label></Stack>
        </Weather>
        <TaskItem $w={55}>
          <svg width="29" height="29"><defs><linearGradient id="win" x1="0" y1="0" x2="1" y2="1"><stop offset="0" stopColor="#7fe0ff" /><stop offset="1" stopColor="#0a9bf5" /></linearGradient></defs>
            <path d="M0 0 H14 V14 H0 Z M15 0 H29 V14 H15 Z M0 15 H14 V29 H0 Z M15 15 H29 V29 H15 Z" fill="url(#win)" /></svg>
        </TaskItem>
        <SearchBox>
          <Line w={19} sw={2}><circle cx="11" cy="7.500" r="6.500" /><path d="M6.500 12.300 L1 18" /></Line>
          <Label $size={15.9} $mt={1}>Search</Label>
          <Grow />
          <svg width="66" height="32" viewBox="0 0 66 32">
            <path d="M30 8 L38 2 L43 6 L52 0 L62 12 V26 H34 Z" fill="#5b6fa8" /><circle cx="50" cy="4" r="4" fill="#f2b98a" /><path d="M44 9 L53 1 L64 14 V24 H48 Z" fill="#47598f" />
            <path d="M2 24 C2 14 14 12 22 14 H60 C66 18 62 30 52 30 H12 C6 30 2 28 2 24 Z" fill="#6f93cc" /><path d="M2 24 C2 16 12 13 18 15 C8 18 8 26 14 31 H28 C10 32 2 30 2 24 Z" fill="#cfe6f5" />
            <path d="M13 8 C11 5 14 4 16 5.500 C19 4 22 4.500 24 6 C26 5 27 7 26 8.500 C28 9.500 31 9.500 33 9 C39 6 46 8 50 13 C53 18 52 24 48 26 C43 28 40 25 38 21.500 C34 24 28 25.500 22 24.500 C17 24.500 15 22 18 20 L22 18 C16 18.500 12 13 13 8 Z" fill="#eee3e8" /><path d="M28 14 C27 18 30 20 33 21 M40 14 C38 18 40 24 44 25" fill="none" stroke="#cdbfca" strokeWidth="1.200" /><circle cx="17" cy="10.500" r="0.900" fill="#333" /><circle cx="21.500" cy="10.500" r="0.900" fill="#333" /><circle cx="18.800" cy="13" r="1.100" fill="#333" />
          </svg>
        </SearchBox>
        <TaskItem $w={55}><svg width="30" height="29"><rect x="0" y="8" width="22" height="20" rx="1" fill="#6b6b6b" /><rect x="8" y="0" width="22" height="20" rx="1" fill="#f2f2f2" /><rect x="8" y="8" width="14" height="12" fill="#b9b9b9" /></svg></TaskItem>
        <TaskItem $w={55}>
          <svg width="30" height="29" viewBox="0 0 30 29">
            <defs>
              <linearGradient id="cpa" x1="0" y1="0" x2="0.300" y2="1"><stop offset="0" stopColor="#1b7fe8" /><stop offset="0.500" stopColor="#2db3c8" /><stop offset="0.850" stopColor="#c5d63a" /></linearGradient>
              <linearGradient id="cpb" x1="1" y1="0" x2="0.200" y2="1"><stop offset="0" stopColor="#a45cf0" /><stop offset="0.500" stopColor="#f0568a" /><stop offset="1" stopColor="#ffb45c" /></linearGradient>
            </defs>
            <path d="M8 0.500 H19 Q22 0.500 22.500 4 L23.500 8 H19 Q16 8 15 11 L12 19 Q11 21 8 21 H4 Q0 21 0.500 16 L4 4 Q5 0.500 8 0.500 Z" fill="url(#cpa)" /><path d="M14 0.500 H19 Q22 0.500 22.500 4 L23.500 8 H19 Q17 8 16 5 Z" fill="#1b4fd0" />
            <path d="M22 28 H11 Q9 28 8 25 L7.500 21 H10 Q13 21 14 18 L16.500 11 Q17.500 8 20.500 8 H26 Q30 8 29.500 13 L26 25 Q25 28 22 28 Z" fill="url(#cpb)" />
          </svg>
        </TaskItem>
        <TaskItem $w={55}>
          <svg width="30" height="30" viewBox="0 0 30 30">
            <defs><linearGradient id="ed" x1="0" y1="0" x2="1" y2="0.400"><stop offset="0" stopColor="#2cb2ee" /><stop offset="0.600" stopColor="#36c6c2" /><stop offset="1" stopColor="#6fdc5a" /></linearGradient></defs>
            <circle cx="15" cy="15" r="15" fill="#0f7bd4" /><path d="M0 14 C1 5 8 0 15 0 C24 0 30 6 30 13 C30 18 26 20 22 20 C19 20 17 19 18 17 C20 12 17 8 11 8 C5 8 1 11 0 14 Z" fill="url(#ed)" />
            <path d="M11 13 C7 20 12 28 21 27 C24 27 27 25 28.500 23 C25 29 19 31 14 30 C8 28 5 18 11 13 Z" fill="#10519c" /><path d="M18 17 C17 19 19 20.500 22 20.500 C26 20.500 29.500 19 30 15 L31 22 L28.500 23 C22 26 13 23 14 17 C15 13 19 13 18 17 Z" fill="#2c1d20" />
          </svg>
        </TaskItem>
        <TaskItem $w={55}>
          <svg width="29" height="30" viewBox="0 0 29 30">
            <defs><linearGradient id="ff" x1="0.800" y1="0" x2="0.300" y2="1"><stop offset="0" stopColor="#ffe34a" /><stop offset="0.400" stopColor="#ff9a1f" /><stop offset="0.700" stopColor="#ff4a3d" /><stop offset="1" stopColor="#e8269a" /></linearGradient></defs>
            <path d="M4 6 L6 3 L8 7 L13 6 C15 5 17 1 18 0 C19 3 21 4 22 7 L23 5 C28 9 29 15 28 19 C26 26 21 29 14.500 29 C7 29 1 24 0.500 16 C0.500 12 2 8 4 6 Z" fill="url(#ff)" />
            <circle cx="15" cy="15" r="6" fill="#8a3fe0" /><path d="M4 9 C8 8 12 9 13 11 L17 12 C16 14 12 14 11 16 C10 20 15 22 19 20 C16 25 8 24 6 18 Z" fill="#ff8a1f" />
          </svg>
        </TaskItem>
        <TaskItem $w={55}><svg width="30" height="30" viewBox="0 0 30 30"><defs><linearGradient id="fo" x1="0" y1="0" x2="1" y2="1"><stop offset="0" stopColor="#ffe07a" /><stop offset="1" stopColor="#fcbf2c" /></linearGradient></defs><path d="M0 3 Q0 2 1 2 H10 L13 4.500 V9 H0 Z" fill="#d99a0a" /><path d="M0 7.500 H10 L13 4.500 H29 Q30 4.500 30 5.500 V28 H0 Z" fill="url(#fo)" /><path d="M5 28 V24 Q5 21 8 21 H22 Q25 21 25 24 V28 Z" fill="#0f6cbd" /><path d="M9 24.500 H21" stroke="#0a4e8f" /></svg></TaskItem>
        <TaskItem $w={55}><svg width="29" height="30" viewBox="0 0 29 30"><path d="M8 6 V1 H21 V6" fill="none" stroke="#3cb4f2" strokeWidth="2" /><path d="M0 5 H29 V25 Q29 29.500 24.500 29.500 H4.500 Q0 29.500 0 25 Z" fill="#efefef" /><path d="M9 11.500 H14 V16.500 H9 Z" fill="#f25022" /><path d="M15 11.500 H20 V16.500 H15 Z" fill="#7fba00" /><path d="M9 17.500 H14 V22.500 H9 Z" fill="#00a4ef" /><path d="M15 17.500 H20 V22.500 H15 Z" fill="#ffb900" /></svg></TaskItem>
        <TaskItem $w={55}><svg width="26" height="28" viewBox="0 0 26 28"><path d="M0 1.500 H26 V14.500 L13 27.500 H0 Z" fill="#ffd800" /><path d="M26 14.500 V27.500 H13 Z" fill="#dfa810" /><path d="M13 27.500 V14.500 H26 Z" fill="#3b3a39" /></svg></TaskItem>
        <TaskItem $w={55}><svg width="30" height="30"><rect y="4" width="30" height="21" rx="4.500" fill="#ff0033" /><path d="M11.500 10.500 L19.500 15 L11.500 19.500 Z" fill="#fff" /></svg><Indicator /></TaskItem>
        <TaskItem $w={50} $active>
          <svg width="30" height="30" viewBox="0 0 30 30">
            <path d="M15 15 L2 7.500 A15 15 0 0 1 28 7.500 Z" fill="#e33b2e" /><path d="M15 7.500 H28 A15 15 0 0 1 15 30 L21.500 18.750 Z" fill="#fcc934" /><path d="M15 15 L21.500 18.750 L15 30 A15 15 0 0 1 2 7.500 L8.500 18.750 Z" fill="#1e9a4c" />
            <circle cx="15" cy="15" r="7.500" fill="#fff" /><circle cx="15" cy="15" r="6" fill="#1a73e8" />
          </svg>
          <Indicator $on />
        </TaskItem>
        <TaskItem $w={55}>
          <svg width="28" height="30" viewBox="0 0 28 30"><defs><linearGradient id="my" x1="0" y1="0" x2="0" y2="1"><stop offset="0" stopColor="#3f7da8" /><stop offset="1" stopColor="#1f5270" /></linearGradient></defs><rect y="0.500" width="28" height="28" rx="2" fill="url(#my)" />
            <path d="M4 4.500 C8 3 12 6 14.500 10 C17 15 17 18 22 20 L19 20.500 L25 24.500 M4 4.500 C3 7 5 8.500 5.500 11 C7 14 5.500 16 7 19.500 L9 16.500 L11.500 20" fill="none" stroke="#d5e6f2" strokeWidth="1.200" /><path d="M19.500 2.500 L22 5.500 L26 8 M22 5.500 L24.500 3" fill="none" stroke="#e8f2f8" strokeWidth="1.800" /></svg>
          <Indicator />
        </TaskItem>
        <Grow />
        <TrayItem $w={36}><Line w={12} h={8} sw={1.700}><path d="M1 7 L6 1.500 L11 7" stroke="#fff" /></Line></TrayItem>
        <TrayItem $w={43}><svg width="20" height="14"><path d="M5.500 12 C0.500 12 0.500 6.500 5.500 6 C6.500 0.500 13 0 15 5 C20.500 4.500 21 12 17 12 Z" fill="#e9e9ee" /></svg></TrayItem>
        <TrayItem $w={36}>
          <svg width="19" height="19"><path d="M1 4 C2 0.500 7 0.500 9.500 3 C12 0.500 17 0.500 18 4 C16 7 12 7 9.500 4.500 C7 7 3 7 1 4 Z" fill="#fff" /><rect y="8" width="19" height="11" rx="2" fill="#d9102e" /><text x="9.500" y="17" fontSize="9" fontWeight="700" fontFamily={UI} fill="#fff" textAnchor="middle">13</text></svg>
        </TrayItem>
        <Stack $w={61} $align="center"><span>ENG</span><span>IN</span></Stack>
        <TrayItem $w={33}><Line w={20} h={16} sw={1.600}><g stroke="#fff"><path d="M0.800 6.500 Q10 -2 19.200 6.500" stroke="#6d6a72" /><path d="M3.500 9.200 Q10 3 16.500 9.200 M6.500 12 Q10 8.500 13.500 12" /><circle cx="10" cy="14" r="1.300" fill="#fff" /></g></Line></TrayItem>
        <TrayItem $w={28}><Line w={20} h={18} sw={1.400}><g stroke="#fff"><path d="M1 6.500 H4 L9 2 V16 L4 11.500 H1 Z" strokeLinejoin="round" /><path d="M11.500 6 Q13.500 9 11.500 12" /><path d="M14 3.500 Q18 9 14 14.500 M16.500 1.500 Q22 9 16.500 16.500" stroke="#6d6a72" /></g></Line></TrayItem>
        <TrayItem $w={32}><Line w={21} h={18} sw={1.600}><g stroke="#fff"><path d="M7 3 H15.500 Q17.500 3 17.500 5 V12 Q17.500 14 15.500 14 H3 Q1.500 14 1.500 12 V10 M18.500 7 H20 V10 H18.500" /><path d="M4 -1 L1 5 H4 L2.500 9.500 L6.500 3.500 H4 L6 -1 Z" fill="#fff" strokeWidth="0.500" /></g></Line></TrayItem>
        <Stack $w={92} $align="flex-end" $ls={0.3}><span>04:55</span><span>27-10-2024</span></Stack>
        <TrayItem $w={38}><svg width="17" height="20"><path d="M8.500 0.500 C13 0.500 15 4 15 8 V12 L16.500 15.500 H0.500 L2 12 V8 C2 4 4 0.500 8.500 0.500 Z M6 17 H11 Q10.500 19 8.500 19 Q6.500 19 6 17 Z" fill="#8fe3ff" /></svg></TrayItem>
        <Gap $w={16} />
      </Taskbar>
    </Screen>
  );
}
